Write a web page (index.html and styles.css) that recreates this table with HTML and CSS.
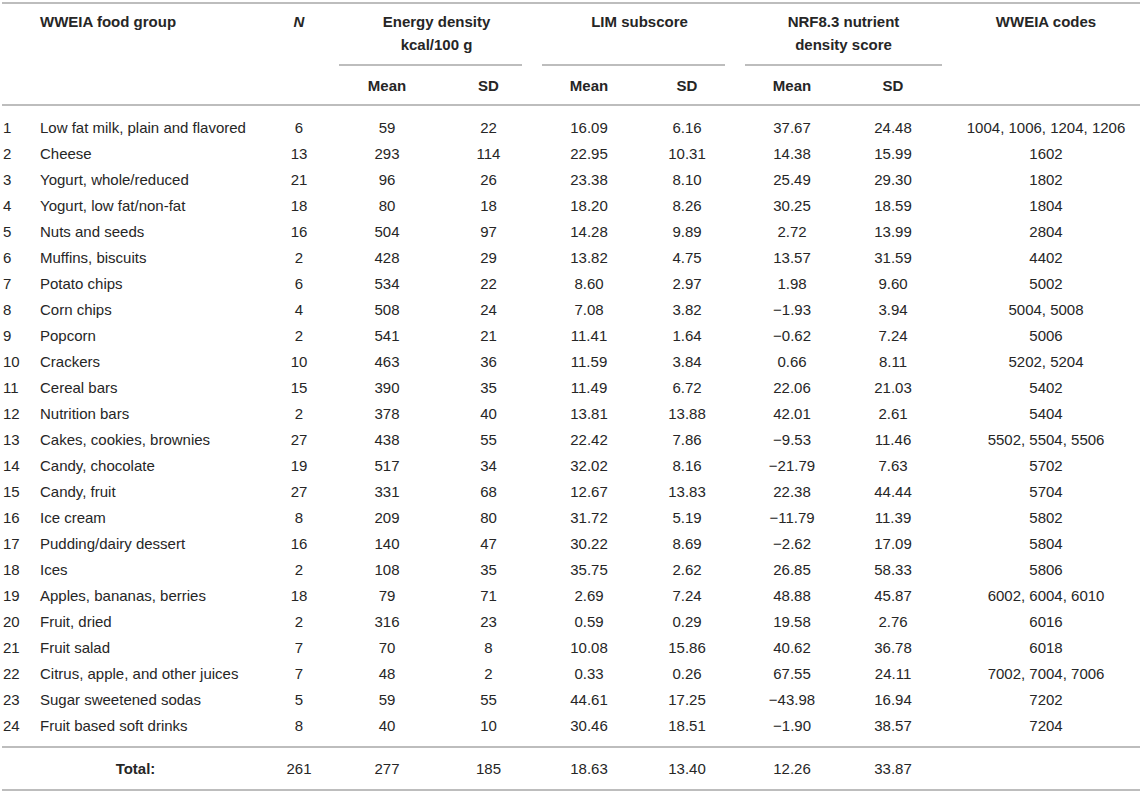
FILE: index.html
```html
<!DOCTYPE html>
<html lang="en">
<head>
  <meta charset="UTF-8" />
  <title>WWEIA food groups</title>
  <link rel="stylesheet" href="styles.css">
</head>
<body>

<table class="data-table">
  <colgroup>
    <col class="c-num">
    <col class="c-name">
    <col class="c-n">
    <col class="c-em">
    <col class="c-esd">
    <col class="c-lm">
    <col class="c-lsd">
    <col class="c-nm">
    <col class="c-nsd">
    <col class="c-codes">
  </colgroup>
  <thead>
    <tr class="head-top">
      <th rowspan="2"></th>
      <th rowspan="2" class="name">WWEIA food group</th>
      <th rowspan="2"><em>N</em></th>
      <th colspan="2" class="group"><div><span class="nudge">Energy density<br>kcal/100 g</span></div></th>
      <th colspan="2" class="group"><div><span class="nudge">LIM subscore</span></div></th>
      <th colspan="2" class="group"><div>NRF8.3 nutrient<br>density score</div></th>
      <th rowspan="2">WWEIA codes</th>
    </tr>
    <tr class="head-sub">
      <th>Mean</th>
      <th>SD</th>
      <th class="lim-mean">Mean</th>
      <th class="lim-sd">SD</th>
      <th>Mean</th>
      <th class="nrf-sd">SD</th>
    </tr>
  </thead>
  <tbody>
    <tr><td class="num">1</td><td class="name">Low fat milk, plain and flavored</td><td>6</td><td>59</td><td>22</td><td>16.09</td><td>6.16</td><td>37.67</td><td>24.48</td><td>1004, 1006, 1204, 1206</td></tr>
    <tr><td class="num">2</td><td class="name">Cheese</td><td>13</td><td>293</td><td>114</td><td>22.95</td><td>10.31</td><td>14.38</td><td>15.99</td><td>1602</td></tr>
    <tr><td class="num">3</td><td class="name">Yogurt, whole/reduced</td><td>21</td><td>96</td><td>26</td><td>23.38</td><td>8.10</td><td>25.49</td><td>29.30</td><td>1802</td></tr>
    <tr><td class="num">4</td><td class="name">Yogurt, low fat/non-fat</td><td>18</td><td>80</td><td>18</td><td>18.20</td><td>8.26</td><td>30.25</td><td>18.59</td><td>1804</td></tr>
    <tr><td class="num">5</td><td class="name">Nuts and seeds</td><td>16</td><td>504</td><td>97</td><td>14.28</td><td>9.89</td><td>2.72</td><td>13.99</td><td>2804</td></tr>
    <tr><td class="num">6</td><td class="name">Muffins, biscuits</td><td>2</td><td>428</td><td>29</td><td>13.82</td><td>4.75</td><td>13.57</td><td>31.59</td><td>4402</td></tr>
    <tr><td class="num">7</td><td class="name">Potato chips</td><td>6</td><td>534</td><td>22</td><td>8.60</td><td>2.97</td><td>1.98</td><td>9.60</td><td>5002</td></tr>
    <tr><td class="num">8</td><td class="name">Corn chips</td><td>4</td><td>508</td><td>24</td><td>7.08</td><td>3.82</td><td>&minus;1.93</td><td>3.94</td><td>5004, 5008</td></tr>
    <tr><td class="num">9</td><td class="name">Popcorn</td><td>2</td><td>541</td><td>21</td><td>11.41</td><td>1.64</td><td>&minus;0.62</td><td>7.24</td><td>5006</td></tr>
    <tr><td class="num">10</td><td class="name">Crackers</td><td>10</td><td>463</td><td>36</td><td>11.59</td><td>3.84</td><td>0.66</td><td>8.11</td><td>5202, 5204</td></tr>
    <tr><td class="num">11</td><td class="name">Cereal bars</td><td>15</td><td>390</td><td>35</td><td>11.49</td><td>6.72</td><td>22.06</td><td>21.03</td><td>5402</td></tr>
    <tr><td class="num">12</td><td class="name">Nutrition bars</td><td>2</td><td>378</td><td>40</td><td>13.81</td><td>13.88</td><td>42.01</td><td>2.61</td><td>5404</td></tr>
    <tr><td class="num">13</td><td class="name">Cakes, cookies, brownies</td><td>27</td><td>438</td><td>55</td><td>22.42</td><td>7.86</td><td>&minus;9.53</td><td>11.46</td><td>5502, 5504, 5506</td></tr>
    <tr><td class="num">14</td><td class="name">Candy, chocolate</td><td>19</td><td>517</td><td>34</td><td>32.02</td><td>8.16</td><td>&minus;21.79</td><td>7.63</td><td>5702</td></tr>
    <tr><td class="num">15</td><td class="name">Candy, fruit</td><td>27</td><td>331</td><td>68</td><td>12.67</td><td>13.83</td><td>22.38</td><td>44.44</td><td>5704</td></tr>
    <tr><td class="num">16</td><td class="name">Ice cream</td><td>8</td><td>209</td><td>80</td><td>31.72</td><td>5.19</td><td>&minus;11.79</td><td>11.39</td><td>5802</td></tr>
    <tr><td class="num">17</td><td class="name">Pudding/dairy dessert</td><td>16</td><td>140</td><td>47</td><td>30.22</td><td>8.69</td><td>&minus;2.62</td><td>17.09</td><td>5804</td></tr>
    <tr><td class="num">18</td><td class="name">Ices</td><td>2</td><td>108</td><td>35</td><td>35.75</td><td>2.62</td><td>26.85</td><td>58.33</td><td>5806</td></tr>
    <tr><td class="num">19</td><td class="name">Apples, bananas, berries</td><td>18</td><td>79</td><td>71</td><td>2.69</td><td>7.24</td><td>48.88</td><td>45.87</td><td>6002, 6004, 6010</td></tr>
    <tr><td class="num">20</td><td class="name">Fruit, dried</td><td>2</td><td>316</td><td>23</td><td>0.59</td><td>0.29</td><td>19.58</td><td>2.76</td><td>6016</td></tr>
    <tr><td class="num">21</td><td class="name">Fruit salad</td><td>7</td><td>70</td><td>8</td><td>10.08</td><td>15.86</td><td>40.62</td><td>36.78</td><td>6018</td></tr>
    <tr><td class="num">22</td><td class="name">Citrus, apple, and other juices</td><td>7</td><td>48</td><td>2</td><td>0.33</td><td>0.26</td><td>67.55</td><td>24.11</td><td>7002, 7004, 7006</td></tr>
    <tr><td class="num">23</td><td class="name">Sugar sweetened sodas</td><td>5</td><td>59</td><td>55</td><td>44.61</td><td>17.25</td><td>&minus;43.98</td><td>16.94</td><td>7202</td></tr>
    <tr><td class="num">24</td><td class="name">Fruit based soft drinks</td><td>8</td><td>40</td><td>10</td><td>30.46</td><td>18.51</td><td>&minus;1.90</td><td>38.57</td><td>7204</td></tr>
  </tbody>
  <tfoot>
    <tr>
      <th colspan="2" class="total-label">Total:</th>
      <td>261</td><td>277</td><td>185</td><td class="lim-mean">18.63</td><td class="lim-sd">13.40</td><td>12.26</td><td class="nrf-sd">33.87</td><td></td>
    </tr>
  </tfoot>
</table>

</body>
</html>
```

FILE: styles.css
```css
body {
  margin: 0;
  padding: 2px 2px 0;
  background: #fff;
  font-family: "Liberation Sans", Arial, sans-serif;
  font-size: 15px;
  color: #262626;
}
.data-table {
  width: 1138px;
  table-layout: fixed;
  border-collapse: collapse;
  border-top: 2px solid #bdbdbd;
  border-bottom: 2px solid #bdbdbd;
}
.c-num { width: 30px; }
.c-name { width: 237px; }
.c-n { width: 60px; }
.c-em { width: 116px; }
.c-esd { width: 87px; }
.c-lm { width: 96px; }
.c-lsd { width: 107px; }
.c-nm { width: 114px; }
.c-nsd { width: 103px; }
.c-codes { width: 188px; }

.data-table th,
.data-table td {
  padding: 0;
  text-align: center;
  line-height: 26px;
  white-space: nowrap;
}
.data-table th {
  font-weight: bold;
}
.data-table .name {
  text-align: left;
  padding-left: 8px;
}
.data-table .num {
  text-align: left;
  padding-left: 1px;
}

/* column nudges: the numbers don't sit dead centre in every column */
.data-table tbody td:nth-child(6),
.data-table .lim-mean {
  padding-left: 18px;
}
.data-table tbody td:nth-child(7),
.data-table .lim-sd {
  padding-left: 11px;
}
.data-table tbody td:nth-child(9),
.data-table .nrf-sd {
  padding-right: 15px;
}

/* header */
.head-top th {
  vertical-align: top;
  padding-top: 6px;
  line-height: 23px;
}
.head-top .group {
  padding: 6px 10px 0;
}
.group div {
  height: 46px;
  padding-bottom: 8px;
  border-bottom: 2px solid #bdbdbd;
}
.group .nudge {
  display: inline-block;
  margin-left: 12px;
}
.head-sub th {
  padding-top: 8px;
  padding-bottom: 7px;
  line-height: 23px;
}
thead tr:last-child th,
thead th[rowspan] {
  border-bottom: 2px solid #bdbdbd;
}

/* body rows */
.data-table tbody tr:first-child td {
  padding-top: 9px;
}
.data-table tbody tr:last-child td {
  padding-bottom: 7px;
}
.data-table tfoot tr {
  border-top: 2px solid #bdbdbd;
}
.data-table tfoot th,
.data-table tfoot td {
  padding-top: 8px;
  padding-bottom: 7px;
}
.total-label {
  text-align: center;
}
```
